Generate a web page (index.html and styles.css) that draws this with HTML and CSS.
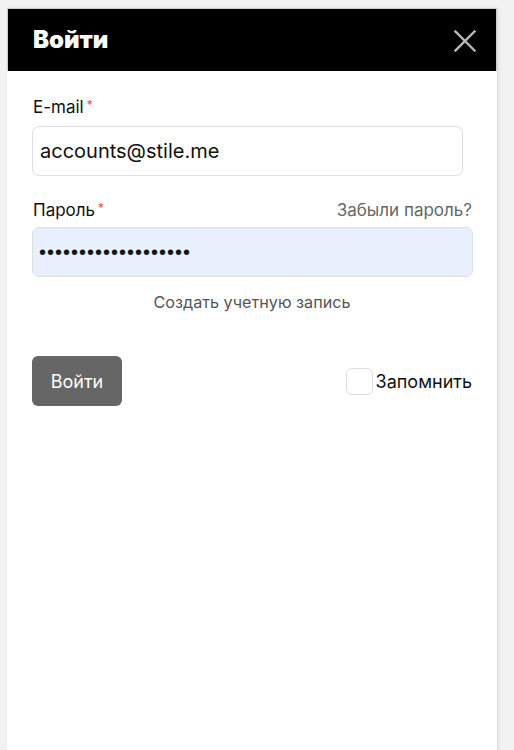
FILE: index.html
```html
<!DOCTYPE html>
<html lang="ru">
<head>
<meta charset="utf-8">
<title>Войти</title>
<link rel="stylesheet" href="styles.css">
</head>
<body>
<div class="modal">
  <div class="modal-header">
    <h1 class="modal-title">Войти</h1>
    <button class="close-btn" aria-label="Закрыть">
      <svg width="22" height="22" viewBox="0 0 22 22"><path d="M1.5 1.5 L20.5 20.5 M20.5 1.5 L1.5 20.5" stroke="#b9b9b9" stroke-width="2.4" stroke-linecap="square" fill="none"/></svg>
    </button>
  </div>
  <form class="modal-body">
    <div class="field">
      <label class="label">E-mail<span class="req">*</span></label>
      <input class="input input-email" type="text" value="accounts@stile.me">
    </div>
    <div class="field field-password">
      <div class="label-row">
        <label class="label">Пароль<span class="req">*</span></label>
        <a class="forgot" href="#">Забыли пароль?</a>
      </div>
      <input class="input input-password" type="password" value="aaaaaaaaaaaaaaaaaaa">
    </div>
    <div class="create-row"><a class="create" href="#">Создать учетную запись</a></div>
    <div class="actions">
      <button class="submit" type="button">Войти</button>
      <label class="remember"><span class="checkbox"></span><span>Запомнить</span></label>
    </div>
  </form>
</div>
</body>
</html>
```
FILE: styles.css
```css
html, body {
  margin: 0;
  padding: 0;
}
body {
  background: #f1f2f1;
  padding: 8px 0 0 7px;
  font-family: Inter, "Liberation Sans", Arial, sans-serif;
  color: #111;
  height: 750px;
  box-sizing: border-box;
  overflow: hidden;
}
.modal {
  width: 491px;
  height: 742px;
  background: #fff;
  border-right: 1px solid #dcdcdc;
  box-shadow: 1px 0 4px rgba(0,0,0,0.06);
  box-sizing: border-box;
}
.modal-header {
  height: 63px;
  background: #000;
  border: 1px solid #ccc;
  border-bottom: none;
  display: flex;
  align-items: center;
  justify-content: space-between;
  padding: 0 20px 0 25px;
  box-sizing: border-box;
}
.modal-title {
  margin: 0;
  color: #fff;
  font-size: 24px;
  font-weight: 900;
  line-height: 30px;
}
.close-btn {
  background: none;
  border: 0;
  padding: 0;
  width: 22px;
  height: 22px;
  display: flex;
  margin-top: 1px;
}
.modal-body {
  padding: 26px 25px 0 25px;
  display: flex;
  flex-direction: column;
}
.field {
  display: flex;
  flex-direction: column;
}
.label {
  font-size: 17px;
  line-height: 20px;
  color: #111;
  padding-left: 1px;
}
.req {
  color: #e0524a;
  font-size: 12px;
  position: relative;
  top: -4px;
  margin-left: 3px;
}
.input {
  margin-top: 7px;
  height: 50px;
  box-sizing: border-box;
  border: 1px solid #dedede;
  border-radius: 7px;
  padding: 0 7px;
  font-family: Inter, "Liberation Sans", Arial, sans-serif;
  font-size: 20px;
  color: #111;
  background: #fff;
  outline: none;
}
.input-email {
  width: 431px;
}
.field-password {
  margin-top: 24px;
}
.label-row {
  display: flex;
  justify-content: space-between;
  align-items: baseline;
}
.forgot {
  color: #666;
  text-decoration: none;
  font-size: 17px;
  line-height: 20px;
}
.input-password {
  width: 441px;
  margin-top: 5px;
  background: #e8f0fe;
  font-family: "Liberation Sans", Arial, sans-serif;
  letter-spacing: 1px;
  padding-left: 6px;
}
.create-row {
  margin-top: 15px;
  display: flex;
  justify-content: center;
}
.create {
  color: #555;
  text-decoration: none;
  font-size: 16.2px;
  line-height: 20px;
}
.actions {
  margin-top: 44px;
  display: flex;
  justify-content: space-between;
  align-items: center;
}
.submit {
  width: 90px;
  height: 50px;
  border: 0;
  border-radius: 6px;
  background: #666;
  color: #fff;
  font-family: Inter, "Liberation Sans", Arial, sans-serif;
  font-size: 18px;
  padding: 0;
}
.remember {
  display: flex;
  align-items: center;
  gap: 3px;
  font-size: 18px;
  color: #111;
}
.checkbox {
  width: 27px;
  height: 27px;
  box-sizing: border-box;
  border: 1px solid #dcdcdc;
  border-radius: 6px;
  background: #fff;
}
```
